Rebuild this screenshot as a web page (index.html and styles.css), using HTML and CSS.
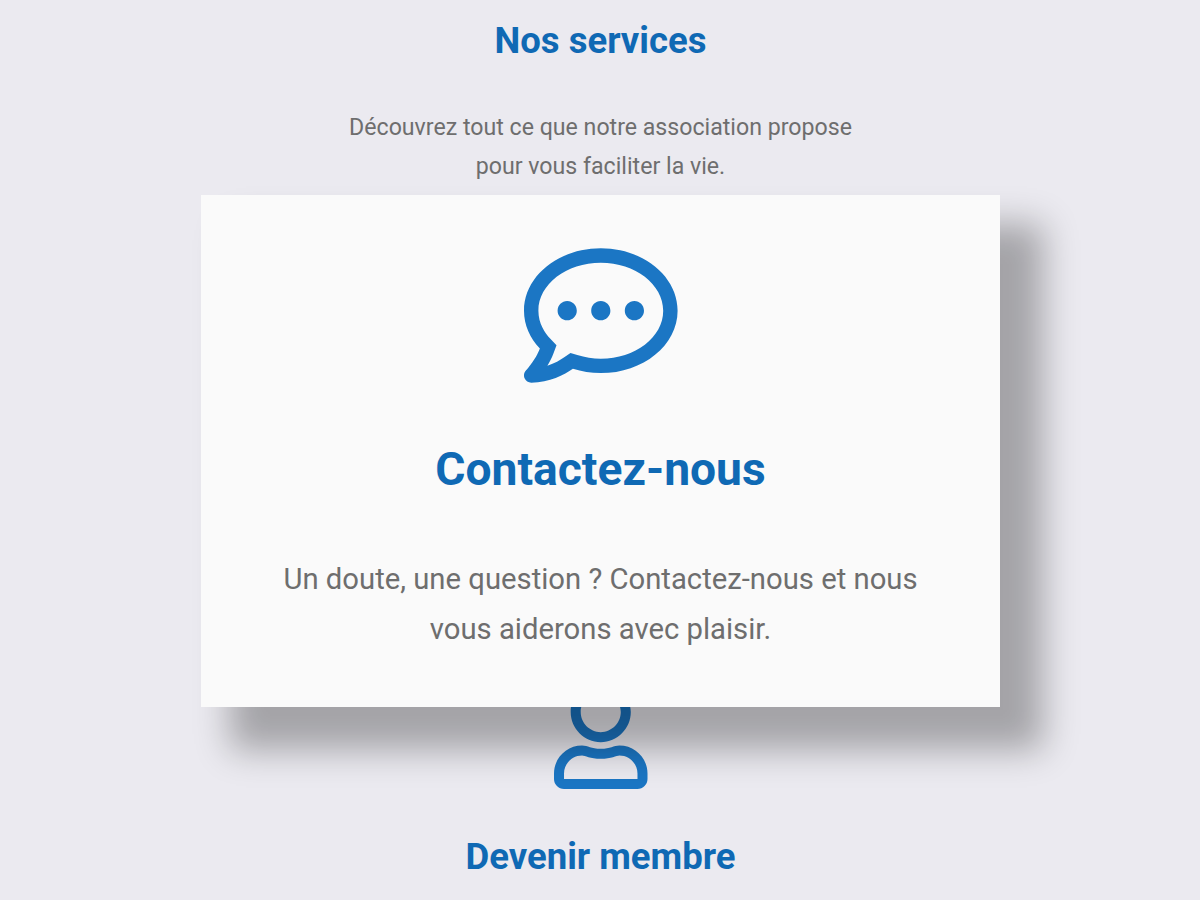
FILE: index.html
```html
<!DOCTYPE html>
<html lang="fr">
<head>
<meta charset="utf-8">
<title>Nos services</title>
<link rel="stylesheet" href="styles.css">
</head>
<body>
<main class="services">
  <header class="intro">
    <h1 class="title">Nos services</h1>
    <p class="lead">Découvrez tout ce que notre association propose<br>pour vous faciliter la vie.</p>
  </header>
  <section class="card">
    <svg class="card-icon" viewBox="0 32 512 448" aria-hidden="true"><path d="M144 208c-17.700 0-32 14.300-32 32s14.300 32 32 32 32-14.300 32-32-14.300-32-32-32zm112 0c-17.700 0-32 14.300-32 32s14.300 32 32 32 32-14.300 32-32-14.300-32-32-32zm112 0c-17.700 0-32 14.300-32 32s14.300 32 32 32 32-14.300 32-32-14.300-32-32-32zM256 32C114.600 32 0 125.100 0 240c0 47.600 19.900 91.200 52.900 126.300C38 405.700 7 439.100 6.500 439.500c-6.600 7-8.400 17.200-4.600 26S14.400 480 24 480c61.500 0 110-25.700 139.100-46.300C192 442.800 223.200 448 256 448c141.400 0 256-93.100 256-208S397.400 32 256 32zm0 368c-26.700 0-53.100-4.100-78.400-12.100l-22.700-7.200-19.500 13.800c-14.300 10.100-33.900 21.400-57.500 29 7.300-12.100 14.400-25.700 19.900-40.200l10.600-28.100-20.600-21.800C69.700 314.100 48 282.200 48 240c0-88.200 93.300-160 208-160s208 71.800 208 160-93.300 160-208 160z"/></svg>
    <h2 class="card-title">Contactez-nous</h2>
    <p class="card-text">Un doute, une question ? Contactez-nous et nous<br>vous aiderons avec plaisir.</p>
  </section>
  <section class="member">
    <svg class="member-icon" viewBox="0 0 448 512" aria-hidden="true"><path d="M313.600 304c-28.700 0-42.500 16-89.600 16-47.100 0-60.800-16-89.600-16C60.200 304 0 364.200 0 438.400V464c0 26.500 21.500 48 48 48h352c26.500 0 48-21.500 48-48v-25.600c0-74.200-60.200-134.400-134.400-134.400zM400 464H48v-25.600c0-47.600 38.800-86.400 86.400-86.400 14.600 0 38.300 16 89.600 16 51.700 0 74.900-16 89.600-16 47.600 0 86.400 38.800 86.400 86.400V464zM224 288c79.500 0 144-64.500 144-144S303.500 0 224 0 80 64.500 80 144s64.500 144 144 144zm0-240c52.900 0 96 43.100 96 96s-43.100 96-96 96-96-43.100-96-96 43.100-96 96-96z"/></svg>
    <h2 class="title">Devenir membre</h2>
  </section>
</main>
</body>
</html>
```

FILE: styles.css
```css
* { box-sizing: border-box; }
body { margin: 0; height: 900px; overflow: hidden; background: #ebeaf0; color: #6e6e6e; font-family: Roboto, sans-serif; }
h1, h2, p { margin: 0; }
svg { display: block; overflow: visible; fill: #1b76c4; }
.services { display: flex; flex-direction: column; align-items: center; text-align: center; padding-left: 1px; }
.intro { height: 195px; padding-top: 19px; }
.title { font-size: 36.500px; line-height: 44px; font-weight: 700; color: #0f69b4; white-space: nowrap; }
.lead { margin-top: 45px; font-size: 23.150px; line-height: 39px; white-space: nowrap; }
.card { position: relative; z-index: 1; display: flex; flex-direction: column; align-items: center; width: 799px; height: 512px; padding-top: 53px; background: #fafafa; box-shadow: 36px 36px 33px 7px rgba(0, 0, 0, .3); }
.card-icon { width: 153.600px; height: 135px; }
.card-title { margin-top: 58px; font-size: 46.200px; line-height: 56px; color: #0f69b4; white-space: nowrap; }
.card-text { margin-top: 57px; font-size: 29.260px; line-height: 50px; white-space: nowrap; }
.member { display: flex; flex-direction: column; align-items: center; margin-top: -25px; }
.member-icon { width: 93.500px; height: 107px; }
.member .title { margin-top: 46px; }
```
